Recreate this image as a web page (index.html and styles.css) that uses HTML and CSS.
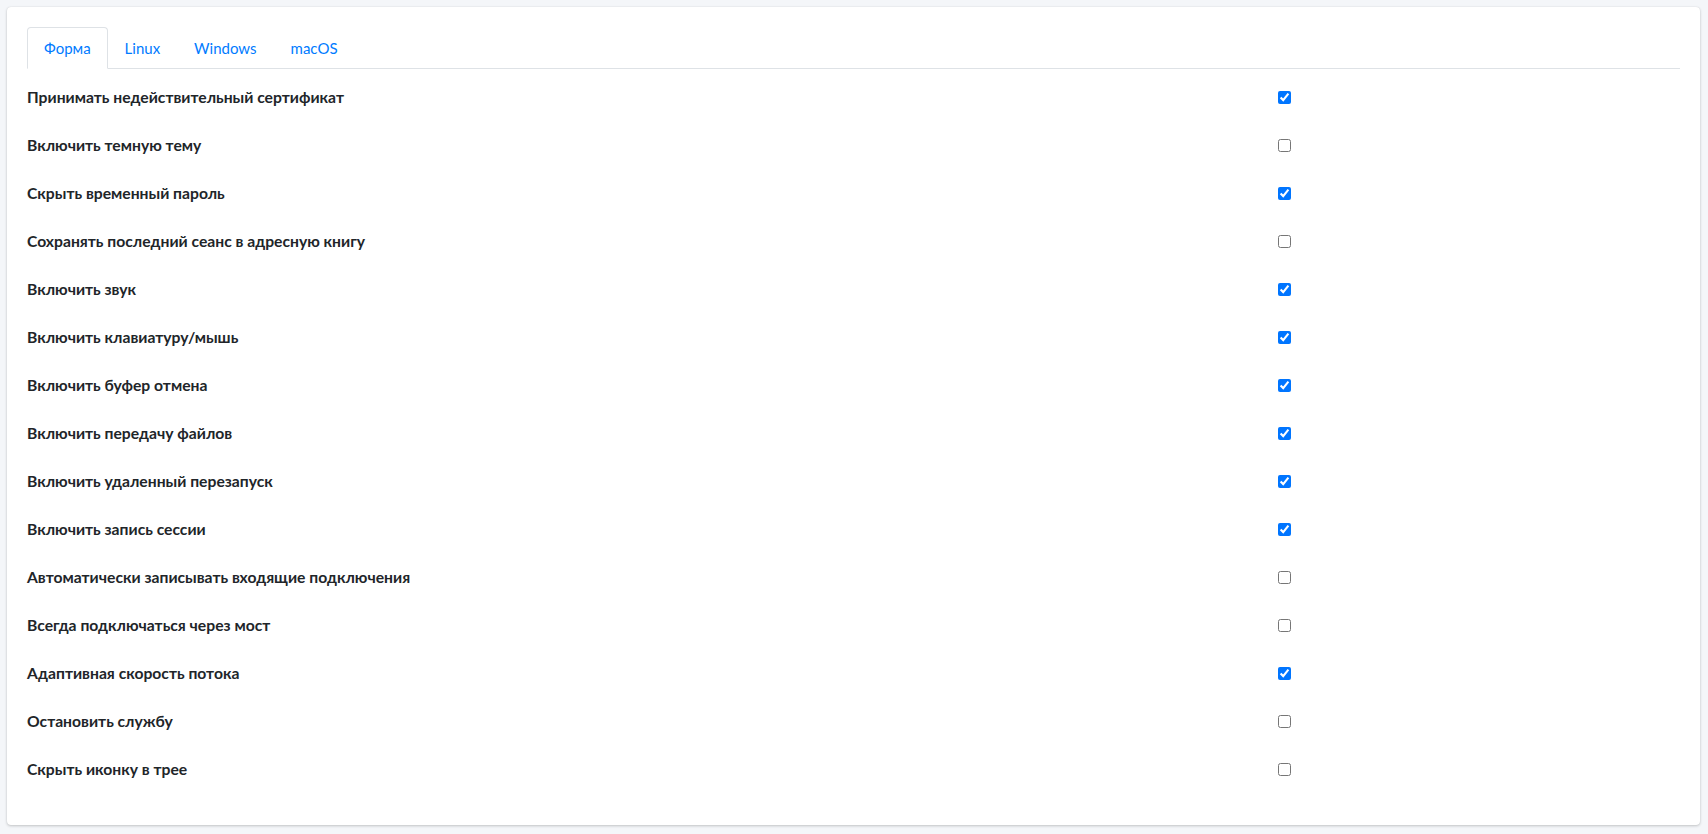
FILE: index.html
```html
<!DOCTYPE html>
<html lang="ru">
<head>
<meta charset="utf-8">
<link rel="stylesheet" href="styles.css">
</head>
<body>
<div class="card">
  <ul class="tabs">
    <li class="tab active">Форма</li>
    <li class="tab">Linux</li>
    <li class="tab">Windows</li>
    <li class="tab">macOS</li>
  </ul>
  <div class="form">
    <div class="row"><label>Принимать недействительный сертификат</label><input type="checkbox" checked></div>
    <div class="row"><label>Включить темную тему</label><input type="checkbox"></div>
    <div class="row"><label>Скрыть временный пароль</label><input type="checkbox" checked></div>
    <div class="row"><label>Сохранять последний сеанс в адресную книгу</label><input type="checkbox"></div>
    <div class="row"><label>Включить звук</label><input type="checkbox" checked></div>
    <div class="row"><label>Включить клавиатуру/мышь</label><input type="checkbox" checked></div>
    <div class="row"><label>Включить буфер отмена</label><input type="checkbox" checked></div>
    <div class="row"><label>Включить передачу файлов</label><input type="checkbox" checked></div>
    <div class="row"><label>Включить удаленный перезапуск</label><input type="checkbox" checked></div>
    <div class="row"><label>Включить запись сессии</label><input type="checkbox" checked></div>
    <div class="row"><label>Автоматически записывать входящие подключения</label><input type="checkbox"></div>
    <div class="row"><label>Всегда подключаться через мост</label><input type="checkbox"></div>
    <div class="row"><label>Адаптивная скорость потока</label><input type="checkbox" checked></div>
    <div class="row"><label>Остановить службу</label><input type="checkbox"></div>
    <div class="row"><label>Скрыть иконку в трее</label><input type="checkbox"></div>
  </div>
</div>
</body>
</html>
```

FILE: styles.css
```css
html, body {
  margin: 0;
  background: #f4f6f9;
}
body {
  padding: 7px 8px 8px 7px;
  font-family: Lato, "Liberation Sans", sans-serif;
  color: #212529;
}
.card {
  background: #fff;
  border-radius: 4px;
  box-shadow: 0 0 1px rgba(0,0,0,.125), 0 1px 3px rgba(0,0,0,.2);
  padding: 20px 20px 23px 20px;
  height: 818px;
  box-sizing: border-box;
}
.tabs {
  list-style: none;
  margin: 0;
  padding: 0;
  display: flex;
  border-bottom: 1px solid #dee2e6;
}
.tab {
  font-size: 15px;
  line-height: 24px;
  padding: 8px 16px;
  color: #007bff;
  border: 1px solid transparent;
  border-top-left-radius: 4px;
  border-top-right-radius: 4px;
  margin-bottom: -1px;
}
.tab.active {
  border-color: #dee2e6 #dee2e6 #fff;
  background: #fff;
}
.form {
  padding-top: 12px;
  display: flex;
  flex-direction: column;
  gap: 16px;
}
.row {
  display: grid;
  grid-template-columns: 1251px auto;
  align-items: center;
  height: 32px;
}
.row label {
  font-weight: 700;
  font-size: 15.7px;
  line-height: 24px;
}
.row input {
  margin: 0;
  width: 13px;
  height: 13px;
}
```
